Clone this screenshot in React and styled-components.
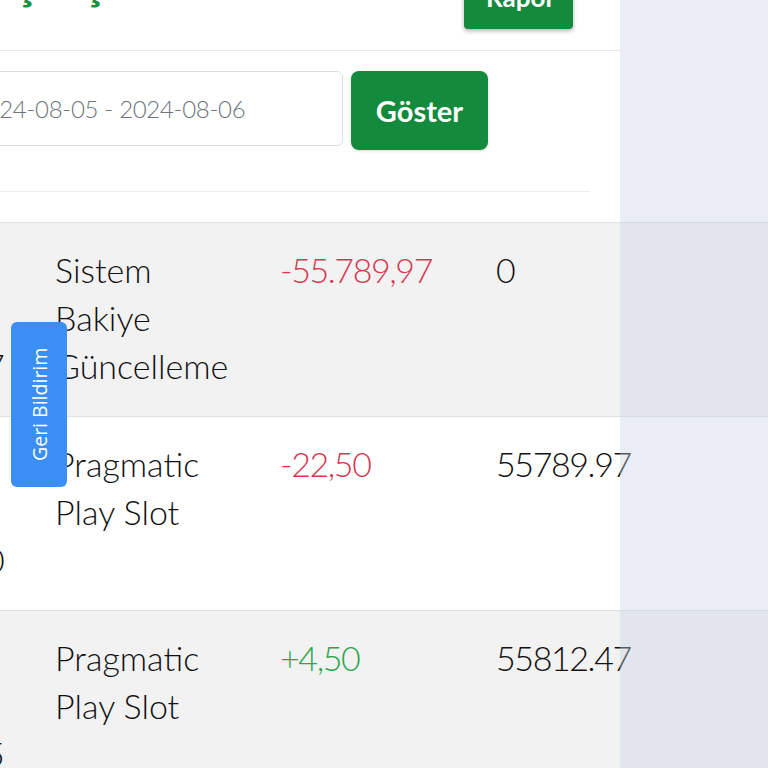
import React from "react"
import styled, { createGlobalStyle } from "styled-components"

const GlobalStyle = createGlobalStyle`
  body {
    margin: 0;
    background: #ffffff;
    font-family: Lato, "Noto Sans", sans-serif;
    color: #212529;
    overflow: hidden;
  }
`

const rows = [
  {
    date: ["06.08.", "2024", "15:21:47"],
    name: "Sistem Bakiye Güncelleme",
    amount: "-55.789,97",
    positive: false,
    balance: "0",
    striped: true,
  },
  {
    date: ["06.08.", "2024", "15:20:30"],
    name: "Pragmatic Play Slot",
    amount: "-22,50",
    positive: false,
    balance: "55789.97",
    striped: false,
  },
  {
    date: ["06.08.", "2024", "15:20:25"],
    name: "Pragmatic Play Slot",
    amount: "+4,50",
    positive: true,
    balance: "55812.47",
    striped: true,
  },
]

const App = () => {
  return (
    <>
      <GlobalStyle />
      <Screen>
        <Page>
          <Header>
            <Title>Kart Geçmişi</Title>
            <ReportButton>Rapor</ReportButton>
          </Header>

          <Filter>
            <FilterRow>
              <Label>Tarih</Label>
              <DateInput>2024-08-05 - 2024-08-06</DateInput>
              <ShowButton>Göster</ShowButton>
            </FilterRow>
          </Filter>

          <Table>
            {rows.map((row, i) => (
              <Row key={i} $striped={row.striped}>
                <Cell>
                  {row.date.map((line) => (
                    <Line key={line}>{line}</Line>
                  ))}
                </Cell>
                <Cell>{row.name}</Cell>
                <Amount $positive={row.positive}>{row.amount}</Amount>
                <Number>{row.balance}</Number>
              </Row>
            ))}
          </Table>
        </Page>

        <Backdrop />
        <Feedback>Geri Bildirim</Feedback>
      </Screen>
    </>
  )
}

const Screen = styled.div`
  position: relative;
  width: 768px;
  height: 768px;
  overflow: hidden;
`

const Page = styled.main`
  width: 908px;
  margin-left: -140px;
`

const Header = styled.header`
  width: 760px;
  box-sizing: border-box;
  height: 51px;
  display: flex;
  justify-content: space-between;
  align-items: flex-end;
  padding: 0 47px 21px 0;
  border-bottom: 1px solid #e7eaed;
`

const Title = styled.h1`
  margin: 0 0 24px 0;
  font-size: 45px;
  line-height: 1;
  font-weight: 700;
  color: #17923f;
  white-space: nowrap;
`

const ReportButton = styled.button`
  border: 0;
  border-radius: 4px;
  background: #138a3c;
  color: #ffffff;
  font-family: Lato, sans-serif;
  font-weight: 700;
  font-size: 26px;
  line-height: 39px;
  padding: 12px 22px;
  width: 109px;
  box-shadow: 0 2px 4px rgba(0, 0, 0, 0.3);
`

const Filter = styled.section`
  width: 760px;
  box-sizing: border-box;
  padding: 20px 30px 0 30px;
`

const FilterRow = styled.div`
  display: flex;
  align-items: flex-start;
  gap: 8px;
  padding-bottom: 41px;
  border-bottom: 1px solid #eceef0;
`

const Label = styled.label`
  width: 62px;
  font-size: 24px;
  line-height: 75px;
  color: #495057;
`

const DateInput = styled.div`
  box-sizing: border-box;
  width: 383px;
  height: 75px;
  padding: 0 12px 0 11px;
  border: 1px solid #dcdfe2;
  border-radius: 6px;
  display: flex;
  align-items: center;
  font-size: 24px;
  font-weight: 300;
  letter-spacing: -0.3px;
  color: #6c757d;
  white-space: nowrap;
`

const ShowButton = styled.button`
  box-sizing: border-box;
  width: 137px;
  height: 79px;
  border: 0;
  border-radius: 8px;
  background: #138a3c;
  color: #ffffff;
  font-family: Lato, sans-serif;
  font-weight: 700;
  font-size: 29px;
  box-shadow: 0 1px 3px rgba(0, 0, 0, 0.15);
`

const Table = styled.div`
  margin-top: 30px;
  border-top: 1px solid #dee2e6;
`

const Row = styled.div`
  display: grid;
  grid-template-columns: 175px 225px 216px 1fr;
  background: ${(p) => (p.$striped ? "#f2f2f2" : "#ffffff")};
  & + & {
    border-top: 1px solid #dee2e6;
  }
`

const Cell = styled.div`
  padding: 23px 20px 26px;
  font-size: 34px;
  font-weight: 300;
  line-height: 48px;
  color: #111;
`

const Line = styled.div`
  letter-spacing: -1.4px;
  white-space: nowrap;
`

const Number = styled(Cell)`
  letter-spacing: -1.4px;
  white-space: nowrap;
`

const Amount = styled(Number)`
  color: ${(p) => (p.$positive ? "#2aa64a" : "#d33a52")};
`

const Backdrop = styled.div`
  position: absolute;
  top: 0;
  right: 0;
  width: 148px;
  height: 100%;
  background: rgba(200, 210, 226, 0.38);
`

const Feedback = styled.button`
  position: absolute;
  left: 11px;
  top: 322px;
  width: 56px;
  height: 165px;
  border: 0;
  border-radius: 6px;
  background: #3b8ef5;
  color: #ffffff;
  font-family: "Open Sans", sans-serif;
  font-size: 19.5px;
  writing-mode: vertical-rl;
  transform: rotate(180deg);
  display: flex;
  align-items: center;
  justify-content: center;
  padding: 0;
`

export default App
